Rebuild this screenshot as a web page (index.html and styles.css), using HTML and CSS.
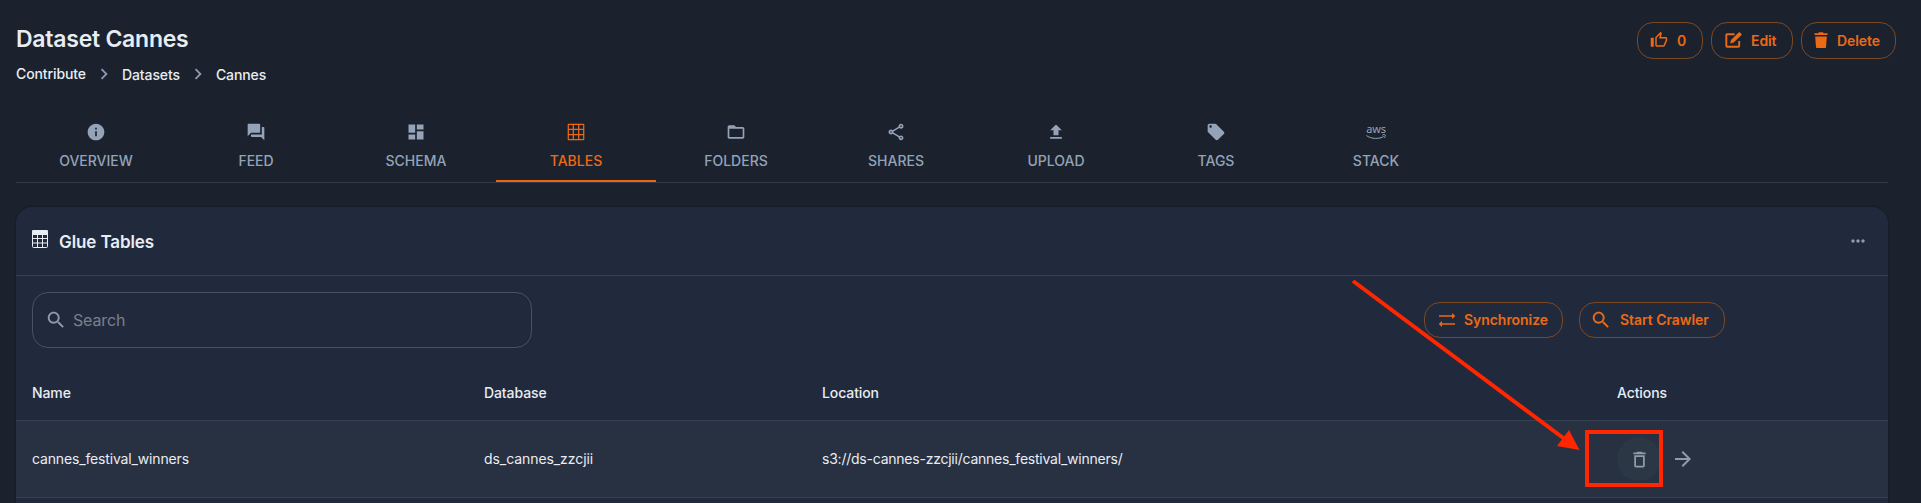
FILE: index.html
```html
<!DOCTYPE html>
<html lang="en">
<head>
<meta charset="utf-8">
<title>Dataset Cannes</title>
<link rel="stylesheet" href="styles.css">
</head>
<body>
<div class="page">
  <header class="header">
    <div class="heading">
      <h1 class="title">Dataset Cannes</h1>
      <nav class="crumbs">
        <span class="crumb crumb-first">Contribute</span>
        <svg class="chevron" viewBox="0 0 24 24"><path d="M10 6 8.59 7.41 13.17 12l-4.58 4.59L10 18l6-6z"/></svg>
        <span class="crumb">Datasets</span>
        <svg class="chevron" viewBox="0 0 24 24"><path d="M10 6 8.59 7.41 13.17 12l-4.58 4.59L10 18l6-6z"/></svg>
        <span class="crumb">Cannes</span>
      </nav>
    </div>
    <div class="actions">
      <button class="btn btn-like"><svg class="icon" viewBox="0 0 24 24"><path d="M9 21h9c.83 0 1.54-.5 1.84-1.22l3.02-7.05c.09-.23.14-.47.14-.73v-2c0-1.1-.9-2-2-2h-6.31l.95-4.57.03-.32c0-.41-.17-.79-.44-1.06L14.17 1 7.58 7.59C7.22 7.95 7 8.45 7 9v10c0 1.1.9 2 2 2zM9 9l4.34-4.34L12 10h9v2l-3 7H9V9zM1 9h4v12H1z"/></svg><span>0</span></button>
      <button class="btn btn-edit"><svg class="icon" viewBox="0 0 17 16"><path class="pad" d="M9.500 2.200H2.300q-1 0-1 1v10.500q0 1 1 1h10.900q1 0 1-1V9"/><path d="M13.600.5q.7-.7 1.400 0l1.300 1.300q.7.700 0 1.400L8.700 10.600l-3.500.8.800-3.500z"/></svg><span>Edit</span></button>
      <button class="btn btn-delete"><svg class="icon" viewBox="0 0 14 16"><path d="M1.200 4.500h11.600l-.8 10.700q0 .8-.8.800H2.800q-.8 0-.8-.8zM.5 1.300h3.800L5 .3h4l.7 1h3.800v1.700H.5z"/></svg><span>Delete</span></button>
    </div>
  </header>

  <nav class="tabs">
    <a class="tab"><svg class="icon" viewBox="0 0 24 24"><path d="M12 2C6.480 2 2 6.480 2 12s4.480 10 10 10 10-4.480 10-10S17.520 2 12 2zm1 15h-2v-6h2v6zm0-8h-2V7h2v2z"/></svg><span>OVERVIEW</span></a>
    <a class="tab"><svg class="icon" viewBox="0 0 24 24"><path d="M21 6h-2v9H6v2c0 .55.45 1 1 1h11l4 4V7c0-.55-.45-1-1-1zm-4 6V3c0-.55-.45-1-1-1H3c-.55 0-1 .45-1 1v14l4-4h10c.55 0 1-.45 1-1z"/></svg><span>FEED</span></a>
    <a class="tab"><svg class="icon" viewBox="0 0 24 24"><path d="M3 13h8V3H3v10zm0 8h8v-6H3v6zm10 0h8V11h-8v10zm0-18v6h8V3h-8z"/></svg><span>SCHEMA</span></a>
    <a class="tab tab-active"><svg class="icon" viewBox="0 0 24 24"><path d="M20.500 2h-17C2.670 2 2 2.670 2 3.500v17c0 .83.67 1.500 1.500 1.500h17c.83 0 1.500-.67 1.500-1.500v-17c0-.83-.67-1.500-1.500-1.500zM8 20.500H3.500V16H8zm0-6H3.500v-5H8zM8 8H3.500V3.500H8zm6.500 12.500h-5V16h5zm0-6h-5v-5h5zm0-6.500h-5V3.500h5zm6 12.500H16V16h4.500zm0-6H16v-5h4.500zm0-6.500H16V3.500h4.500z"/></svg><span>TABLES</span></a>
    <a class="tab"><svg class="icon" viewBox="0 0 24 24"><path d="M20 6h-8l-2-2H4c-1.100 0-1.990.9-1.990 2L2 18c0 1.100.9 2 2 2h16c1.100 0 2-.9 2-2V8c0-1.100-.9-2-2-2zm0 12H4V8h16v10z"/></svg><span>FOLDERS</span></a>
    <a class="tab"><svg class="icon" viewBox="0 0 24 24"><path d="M18 16.080c-.76 0-1.440.3-1.960.77L8.910 12.700c.05-.23.09-.46.09-.7s-.04-.47-.09-.7l7.050-4.110c.54.5 1.250.81 2.040.81 1.660 0 3-1.340 3-3s-1.340-3-3-3-3 1.340-3 3c0 .24.04.47.09.7L8.040 9.810C7.500 9.310 6.790 9 6 9c-1.660 0-3 1.340-3 3s1.340 3 3 3c.79 0 1.500-.31 2.040-.81l7.120 4.160c-.05.21-.08.43-.08.65 0 1.610 1.310 2.920 2.920 2.920s2.920-1.310 2.920-2.920-1.310-2.920-2.920-2.920zM18 4c.55 0 1 .45 1 1s-.45 1-1 1-1-.45-1-1 .45-1 1-1zM6 13c-.55 0-1-.45-1-1s.45-1 1-1 1 .45 1 1-.45 1-1 1zm12 7.020c-.55 0-1-.45-1-1s.45-1 1-1 1 .45 1 1-.45 1-1 1z"/></svg><span>SHARES</span></a>
    <a class="tab"><svg class="icon" viewBox="0 0 24 24"><path d="M9 16h6v-6h4l-7-7-7 7h4v6zm-4 2h14v2H5z"/></svg><span>UPLOAD</span></a>
    <a class="tab"><svg class="icon" viewBox="0 0 24 24"><path d="m21.410 11.580-9-9C12.050 2.220 11.550 2 11 2H4c-1.100 0-2 .9-2 2v7c0 .55.22 1.050.59 1.420l9 9c.36.36.86.58 1.410.58s1.050-.22 1.410-.59l7-7c.37-.36.59-.86.59-1.410s-.23-1.060-.59-1.420zM5.500 7C4.670 7 4 6.330 4 5.500S4.670 4 5.500 4 7 4.670 7 5.500 6.330 7 5.500 7z"/></svg><span>TAGS</span></a>
    <a class="tab"><span class="aws-mark"><span class="aws">aws</span><svg class="smile" viewBox="0 0 20 6"><path d="M.5 1.600c5 3.600 13 3.600 17.200.9M16.300 1c1.200-.5 2.400-.6 3 0 .2.800-.2 2-1 3"/></svg></span><span>STACK</span></a>
  </nav>

  <main class="card">
    <div class="card-head">
      <svg class="table-icon" viewBox="0 0 16 18"><path class="fill" d="M1 0h14a1 1 0 0 1 1 1v4H0V1a1 1 0 0 1 1-1z"/><path class="grid" d="M.5 4.500v12q0 1 1 1h13q1 0 1-1v-12M0 8.500h16M0 13h16M5.500 5v13M10.500 5v13"/></svg>
      <h2 class="card-title">Glue Tables</h2>
      <svg class="more" viewBox="0 0 24 24"><path d="M6 10c-1.100 0-2 .9-2 2s.9 2 2 2 2-.9 2-2-.9-2-2-2zm12 0c-1.100 0-2 .9-2 2s.9 2 2 2 2-.9 2-2-.9-2-2-2zm-6 0c-1.100 0-2 .9-2 2s.9 2 2 2 2-.9 2-2-.9-2-2-2z"/></svg>
    </div>
    <div class="toolbar">
      <div class="search">
        <svg class="icon lens" viewBox="0 0 24 24"><path d="M15.500 14h-.79l-.28-.27C15.410 12.590 16 11.110 16 9.500 16 5.910 13.090 3 9.500 3S3 5.910 3 9.500 5.910 16 9.500 16c1.610 0 3.090-.59 4.230-1.570l.27.28v.79l5 4.990L20.490 19l-4.990-5zm-6 0C7.010 14 5 11.990 5 9.500S7.010 5 9.500 5 14 7.010 14 9.500 11.990 14 9.500 14z"/></svg>
        <span>Search</span>
      </div>
      <div class="tools">
        <button class="btn btn-sync"><svg class="icon" viewBox="0 0 20 20"><path d="M2 5.200h13V3l3.300 3-3.300 3V6.800H2zM18 13.200H5V11l-3.300 3L5 17v-2.200h13z"/></svg><span>Synchronize</span></button>
        <button class="btn btn-crawl"><svg class="icon lens" viewBox="0 0 24 24"><path d="M15.500 14h-.79l-.28-.27C15.410 12.590 16 11.110 16 9.500 16 5.910 13.090 3 9.500 3S3 5.910 3 9.500 5.910 16 9.500 16c1.610 0 3.090-.59 4.230-1.570l.27.28v.79l5 4.990L20.490 19l-4.990-5zm-6 0C7.010 14 5 11.990 5 9.500S7.010 5 9.500 5 14 7.010 14 9.500 11.990 14 9.500 14z"/></svg><span>Start Crawler</span></button>
      </div>
    </div>
    <div class="row row-head">
      <span>Name</span><span>Database</span><span>Location</span><span>Actions</span>
    </div>
    <div class="row row-body">
      <span class="cell">cannes_festival_winners</span><span class="cell cell-db">ds_cannes_zzcjii</span><span class="cell cell-path">s3://ds-cannes-zzcjii/cannes_festival_winners/</span>
      <div class="row-actions">
        <span class="round round-hover"><svg class="icon bin" viewBox="0 0 24 24"><path d="M6 19c0 1.100.9 2 2 2h8c1.100 0 2-.9 2-2V7H6v12zM8 9h8v10H8V9zm7.500-5-1-1h-5l-1 1H5v2h14V4z"/></svg></span>
        <span class="round"><svg class="icon go" viewBox="0 0 24 24"><path d="m12 4-1.410 1.410L16.170 11H4v2h12.170l-5.580 5.590L12 20l8-8z"/></svg></span>
      </div>
    </div>
  </main>
</div>
<svg class="callout" viewBox="0 0 1921 503"><path class="line" d="M1353 281 1566 440"/><path class="head" d="M1579.500 450 1569 430 1557 446z"/><rect class="box" x="1587" y="432" width="74" height="53"/></svg>
</body>
</html>
```
FILE: styles.css
```css
* { box-sizing: border-box; }
body {
  margin: 0;
  height: 503px;
  overflow: hidden;
  background: #1b222e;
  color: #e8edf3;
  font-family: Inter, "Liberation Sans", sans-serif;
  font-size: 14px;
  white-space: nowrap;
}
svg { display: block; fill: currentColor; flex: none; }
.page { padding: 22px 33px 0 16px; }
.icon { width: 20px; height: 20px; }

.header { display: flex; justify-content: space-between; height: 90px; }
.title { margin: 0; padding-top: 2px; font-size: 23px; line-height: 30px; font-weight: 600; letter-spacing: -0.25px; }
.crumbs { display: flex; align-items: center; height: 22px; margin-top: 9px; font-weight: 500; letter-spacing: -0.1px; }
.crumb { padding-top: 1px; }
.crumb-first { padding: 0 0 1px; }
.chevron { width: 22px; height: 22px; margin: 0 7px; color: #8e9bb0; }

.actions { display: flex; gap: 8px; margin-right: -8px; height: 37px; }
.btn {
  display: flex; align-items: center; gap: 8px;
  padding: 0 0 0 12px;
  border: 1px solid #7b4824; border-radius: 16px;
  background: none; color: #ec6a16;
  font: 600 14px/24px Inter, "Liberation Sans", sans-serif;
  white-space: nowrap;
}
.btn-like { width: 66px; gap: 9px; }
.btn-like .icon { width: 18px; height: 18px; margin-bottom: 1px; }
.btn-edit { width: 82px; padding-left: 13px; gap: 9px; letter-spacing: -0.1px; }
.btn-edit .icon { width: 17px; height: 16px; margin-bottom: 1px; }
.pad { fill: none; stroke: currentColor; stroke-width: 1.900; }
.btn-delete { width: 95px; gap: 9px; letter-spacing: -0.1px; }
.btn-delete .icon { width: 14px; height: 16px; margin-bottom: 1px; }

.tabs { display: flex; height: 71px; border-bottom: 1px solid #303b49; color: #94a3b8; font-weight: 500; }
.tab { width: 160px; height: 70px; display: flex; flex-direction: column; align-items: center; gap: 9px; padding-top: 10px; line-height: 20px; }
.tab-active { color: #ec6a16; border-bottom: 2px solid #f0660f; }
.aws-mark { display: flex; flex-direction: column; align-items: center; width: 20px; height: 20px; }
.aws { font: 11px/13px "Noto Sans", sans-serif; letter-spacing: -0.2px; }
.smile { width: 20px; height: 6px; margin-top: -1px; fill: none; stroke: currentColor; stroke-width: 1; }

.card { margin-top: 24px; height: 296px; border-radius: 16px 16px 0 0; background: #212a3c; box-shadow: 0 0 1px 1px #171d28; }
.card-head { display: flex; align-items: center; height: 69px; padding: 0 20px 0 16px; border-bottom: 1px solid #364152; }
.table-icon { width: 16px; height: 18px; margin: -5px 11px 0 0; }
.table-icon .grid { fill: none; stroke: currentColor; stroke-width: 1; }
.card-title { margin: 0; padding-top: 2px; font-size: 17px; font-weight: 600; letter-spacing: -0.1px; }
.more { width: 20px; height: 20px; margin-left: auto; color: #929ba9; }

.toolbar { display: flex; justify-content: space-between; align-items: center; height: 88px; padding: 0 163px 0 16px; }
.search { display: flex; align-items: center; gap: 6px; width: 500px; height: 56px; padding-left: 12px; border: 1px solid #48515f; border-radius: 16px; color: #929ba9; font-size: 16px; letter-spacing: -0.15px; }
.search span { color: #76808e; }
.lens { width: 22px; height: 22px; }
.tools { display: flex; gap: 16px; height: 36px; }
.btn-sync { width: 139px; gap: 7px; letter-spacing: -0.05px; }
.btn-crawl { width: 146px; padding-left: 10px; letter-spacing: -0.05px; }

.row { display: grid; grid-template-columns: 452px 338px 795px 1fr; align-items: center; padding-left: 16px; border-bottom: 1px solid #364152; }
.row-head { height: 57px; font-weight: 500; letter-spacing: -0.1px; }
.row-body { height: 77px; background: #283142; }
.cell { padding-bottom: 1px; letter-spacing: -0.15px; }
.cell-db { letter-spacing: -0.07px; }
.cell-path { letter-spacing: -0.23px; }
.row-actions { display: flex; }
.round { display: grid; place-items: center; width: 44px; height: 44px; border-radius: 50%; color: #929ba9; }
.round-hover { background: #2b3744; }
.bin { width: 21px; height: 21px; }
.go { width: 24px; height: 24px; }

.callout { position: absolute; left: 0; top: 0; width: 1921px; height: 503px; fill: none; }
.callout .line, .callout .box { stroke: #ff2600; stroke-width: 4; }
.callout .head { fill: #ff2600; }
```
